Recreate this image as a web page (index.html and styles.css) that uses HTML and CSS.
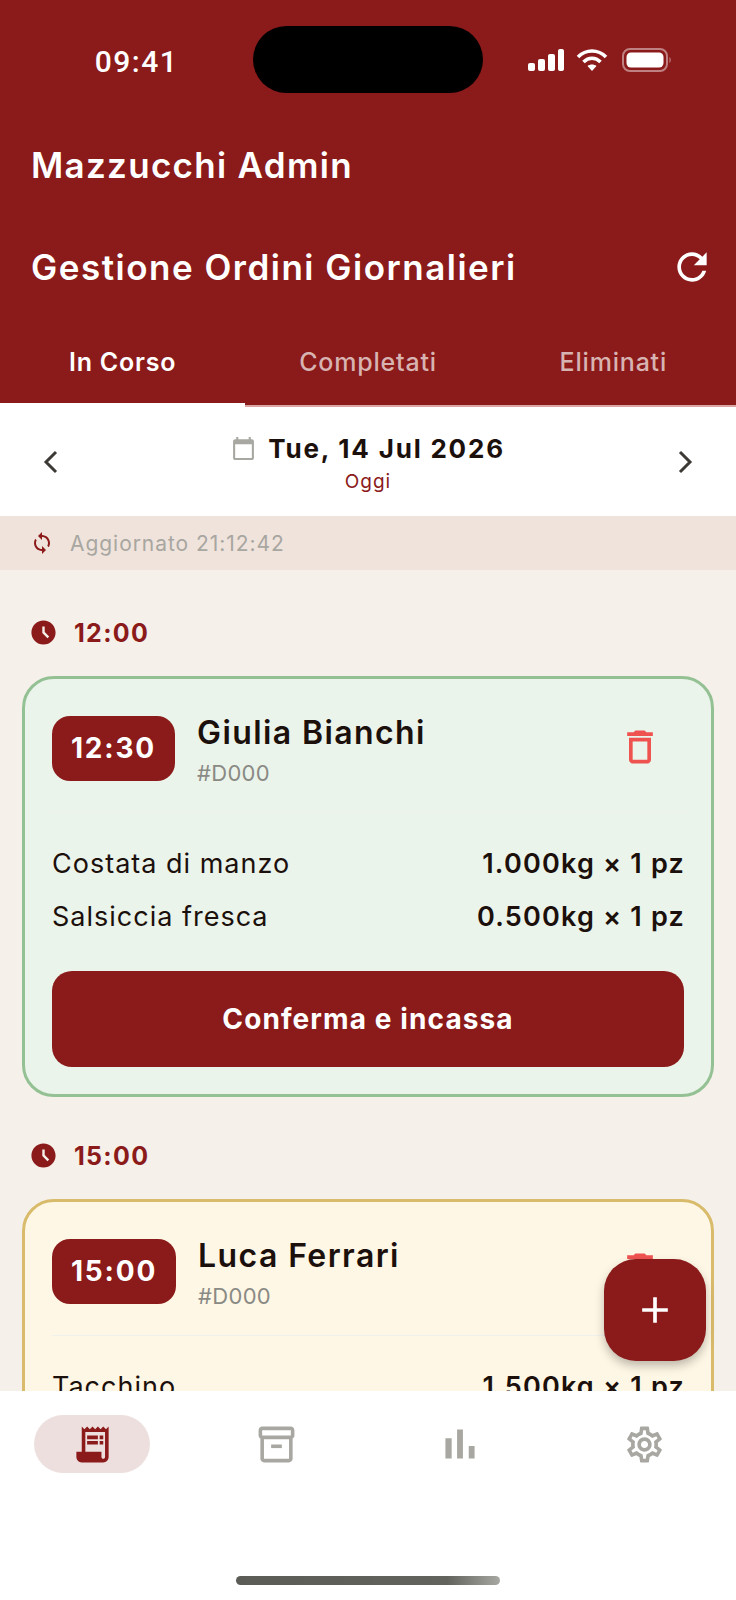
FILE: index.html
```html
<!DOCTYPE html>
<html lang="it">
<head>
    <meta charset="UTF-8">
    <meta name="viewport" content="width=device-width, initial-scale=1.0">
    <title>Mazzucchi Admin</title>
    <link rel="stylesheet" href="styles.css">
</head>
<body>
    <div class="app">
        <header class="header">
            <div class="status-bar">
                <span class="status-time">09:41</span>
                <span class="island"></span>
                <div class="status-icons">
                    <svg width="37" height="24" viewBox="0 0 37 24" fill="#fff"><rect x="1" y="15" width="7" height="8" rx="2"/><rect x="11" y="11" width="7" height="12" rx="2"/><rect x="21" y="6" width="7" height="17" rx="2"/><rect x="31" y="1" width="6" height="22" rx="2"/></svg>
                    <svg width="32" height="24" viewBox="0 0 32 24" fill="none" stroke="#fff" stroke-width="3.6"><path d="M2 9 C10 1 22 1 30 9"/><path d="M7.5 14 C12.5 9 19.500 9 24.500 14"/><path d="M16 23 L11.500 18 C14 16 18 16 20.500 18 Z" fill="#fff" stroke="none"/></svg>
                    <svg class="battery" width="50" height="24" viewBox="0 0 50 24" fill="none"><rect x="1" y="1" width="44" height="22" rx="7" stroke="#fff" stroke-opacity=".45" stroke-width="2"/><rect x="4.500" y="4.500" width="37" height="15" rx="4.500" fill="#fff"/><path d="M47.500 9 C49 10 49 14 47.500 15 Z" fill="#fff" fill-opacity=".5"/></svg>
                </div>
            </div>
            <h1 class="app-title">Mazzucchi Admin</h1>
            <div class="page-title">
                <h2>Gestione Ordini Giornalieri</h2>
                <svg class="icon-refresh" viewBox="0 0 24 24"><path d="M17.65 6.35C16.2 4.9 14.21 4 12 4c-4.42 0-7.99 3.58-7.99 8s3.57 8 7.99 8c3.730 0 6.840-2.550 7.730-6h-2.080c-.820 2.330-3.040 4-5.650 4-3.310 0-6-2.690-6-6s2.690-6 6-6c1.660 0 3.140.690 4.220 1.780L13 11h7V4l-2.350 2.350z"/></svg>
            </div>
            <nav class="tabs">
                <div class="tab active">In Corso</div>
                <div class="tab">Completati</div>
                <div class="tab">Eliminati</div>
            </nav>
        </header>

        <div class="date-row">
            <svg class="chevron" viewBox="0 0 16 24"><polyline points="13,2 3,12 13,22"/></svg>
            <div class="date-center">
                <div class="date-line">
                    <svg class="icon-calendar" viewBox="0 0 24 24"><path d="M20 3h-1V1h-2v2H7V1H5v2H4c-1.100 0-2 .900-2 2v16c0 1.100.900 2 2 2h16c1.100 0 2-.900 2-2V5c0-1.100-.900-2-2-2zm0 18H4V8h16v13z"/></svg>
                    <span class="date-text">Tue, 14 Jul 2026</span>
                </div>
                <div class="date-today">Oggi</div>
            </div>
            <svg class="chevron" viewBox="0 0 16 24"><polyline points="3,2 13,12 3,22"/></svg>
        </div>

        <div class="sync-bar">
            <svg class="icon-sync" viewBox="0 0 24 24"><path d="M12 4V1L8 5l4 4V6c3.310 0 6 2.690 6 6 0 1.010-.250 1.970-.700 2.800l1.460 1.460C19.540 15.030 20 13.570 20 12c0-4.420-3.580-8-8-8zm0 14c-3.310 0-6-2.690-6-6 0-1.010.250-1.970.700-2.800L5.240 7.740C4.460 8.970 4 10.430 4 12c0 4.420 3.580 8 8 8v3l4-4-4-4v3z"/></svg>
            <span>Aggiornato 21:12:42</span>
        </div>

        <main class="orders">
            <div class="slot">
                <svg class="icon-clock" viewBox="0 0 24 24"><path d="M11.990 2C6.470 2 2 6.480 2 12s4.470 10 9.990 10C17.520 22 22 17.520 22 12S17.520 2 11.990 2zm3.300 14.710L11 12.410V7h2v4.590l3.710 3.710-1.420 1.410z"/></svg>
                <span>12:00</span>
            </div>
            <section class="card card-paid">
                <div class="card-head">
                    <div class="time-badge">12:30</div>
                    <div class="customer">
                        <div class="customer-name">Giulia Bianchi</div>
                        <div class="customer-code">#D000</div>
                    </div>
                    <svg class="icon-delete" viewBox="0 0 24 24"><path d="M6 19c0 1.100.900 2 2 2h8c1.100 0 2-.900 2-2V7H6v12zM8 9h8v10H8V9zm7.500-5l-1-1h-5l-1 1H5v2h14V4z"/></svg>
                </div>
                <div class="items">
                    <div class="item"><span>Costata di manzo</span><strong>1.000kg × 1 pz</strong></div>
                    <div class="item"><span>Salsiccia fresca</span><strong>0.500kg × 1 pz</strong></div>
                </div>
                <button class="confirm">Conferma e incassa</button>
            </section>

            <div class="slot">
                <svg class="icon-clock" viewBox="0 0 24 24"><path d="M11.990 2C6.470 2 2 6.480 2 12s4.470 10 9.990 10C17.520 22 22 17.520 22 12S17.520 2 11.990 2zm3.300 14.710L11 12.410V7h2v4.590l3.710 3.710-1.420 1.410z"/></svg>
                <span>15:00</span>
            </div>
            <section class="card card-pending">
                <div class="card-head">
                    <div class="time-badge">15:00</div>
                    <div class="customer">
                        <div class="customer-name">Luca Ferrari</div>
                        <div class="customer-code">#D000</div>
                    </div>
                    <svg class="icon-delete" viewBox="0 0 24 24"><path d="M6 19c0 1.100.900 2 2 2h8c1.100 0 2-.900 2-2V7H6v12zM8 9h8v10H8V9zm7.500-5l-1-1h-5l-1 1H5v2h14V4z"/></svg>
                </div>
                <div class="items">
                    <div class="item"><span>Tacchino</span><strong>1.500kg × 1 pz</strong></div>
                </div>
            </section>
        </main>

        <button class="fab">
            <svg viewBox="0 0 24 24"><path d="M19 13h-6v6h-2v-6H5v-2h6V5h2v6h6v2z"/></svg>
        </button>

        <footer class="bottom-nav">
            <div class="nav-items">
                <div class="nav-item active">
                    <svg viewBox="0 0 24 24"><path d="M19.500 3.500 18 2l-1.500 1.500L15 2l-1.500 1.500L12 2l-1.500 1.500L9 2 7.500 3.500 6 2v14H3v3c0 1.660 1.340 3 3 3h12c1.660 0 3-1.340 3-3V2l-1.500 1.500zM19 19c0 .550-.450 1-1 1s-1-.450-1-1v-3H8V5h11v14z"/><path d="M9 7h6v2H9zm7 0h2v2h-2zM9 10h6v2H9zm7 0h2v2h-2z"/></svg>
                </div>
                <div class="nav-item">
                    <svg viewBox="0 0 24 24"><path d="M20 2H4c-1 0-2 .900-2 2v3.010c0 .720.430 1.340 1 1.690V20c0 1.100 1.100 2 2 2h14c.900 0 2-.900 2-2V8.700c.570-.350 1-.970 1-1.690V4c0-1.100-1-2-2-2zm-1 18H5V9h14v11zm1-13H4V4h16v3z"/><path d="M9 12h6v2H9z"/></svg>
                </div>
                <div class="nav-item">
                    <svg class="icon-chart" viewBox="0 0 24 24"><path d="M5 9.200h3V19H5zM10.600 5h2.800v14h-2.800zm5.600 8H19v6h-2.800z"/></svg>
                </div>
                <div class="nav-item">
                    <svg viewBox="0 0 24 24"><path d="M19.430 12.980c.040-.320.070-.640.070-.980 0-.340-.030-.660-.070-.980l2.110-1.650c.190-.150.240-.420.120-.640l-2-3.460c-.090-.160-.260-.250-.440-.250-.060 0-.120.010-.170.030l-2.490 1c-.520-.400-1.080-.730-1.690-.980l-.380-2.650C14.460 2.180 14.250 2 14 2h-4c-.250 0-.460.180-.490.420l-.380 2.650c-.610.250-1.170.590-1.690.980l-2.490-1c-.060-.020-.120-.030-.180-.030-.170 0-.340.090-.430.250l-2 3.460c-.130.220-.070.490.120.640l2.110 1.650c-.040.320-.070.650-.070.980 0 .330.030.660.070.980l-2.110 1.650c-.190.150-.240.420-.120.640l2 3.460c.090.160.260.250.440.250.060 0 .120-.010.170-.030l2.490-1c.520.400 1.080.730 1.690.980l.380 2.650c.030.240.240.420.490.420h4c.250 0 .460-.180.490-.420l.380-2.650c.610-.250 1.170-.590 1.690-.980l2.490 1c.060.020.120.030.180.030.170 0 .340-.090.430-.250l2-3.460c.120-.220.070-.490-.120-.640l-2.110-1.650zm-1.980-1.710c.040.310.050.520.050.730 0 .210-.020.430-.050.730l-.140 1.130.890.700 1.080.840-.700 1.210-1.270-.510-1.040-.420-.900.680c-.430.320-.840.560-1.250.730l-1.060.43-.160 1.130-.200 1.350h-1.400l-.190-1.350-.160-1.130-1.060-.43c-.430-.180-.830-.410-1.230-.710l-.910-.700-1.060.43-1.270.510-.700-1.210 1.080-.84.890-.700-.140-1.130c-.030-.310-.050-.540-.050-.740s.020-.430.050-.730l.140-1.130-.89-.700-1.080-.84.700-1.210 1.270.510 1.040.42.900-.68c.430-.320.840-.560 1.250-.73l1.060-.43.160-1.130.200-1.350h1.390l.190 1.350.160 1.130 1.060.43c.430.180.830.410 1.230.710l.91.700 1.060-.43 1.270-.51.700 1.210-1.070.85-.89.700.140 1.130zM12 8c-2.210 0-4 1.790-4 4s1.790 4 4 4 4-1.790 4-4-1.790-4-4-4zm0 6c-1.100 0-2-.900-2-2s.900-2 2-2 2 .900 2 2-.900 2-2 2z"/></svg>
                </div>
            </div>
            <div class="home-indicator"></div>
        </footer>
    </div>
</body>
</html>
```

FILE: styles.css
```css
* {
    box-sizing: border-box;
}
body {
    margin: 0;
    font-family: Inter, "Noto Sans", sans-serif;
    color: #1c100c;
    background-color: #f5f0e9;
}
h1, h2 {
    margin: 0;
}
.app {
    position: relative;
    display: flex;
    flex-direction: column;
    width: 736px;
    height: 1600px;
    overflow: hidden;
}

/* header */
.header {
    flex: none;
    background-color: #8b1a1a;
    color: #fff;
}
.status-bar {
    display: grid;
    grid-template-columns: 253px 230px 1fr;
    height: 67px;
    margin-top: 26px;
}
.status-time {
    padding: 4px 0 0 20px;
    font-family: Roboto, sans-serif;
    font-size: 30px;
    font-weight: 500;
    line-height: 63px;
    letter-spacing: 1.5px;
    text-align: center;
}
.island {
    background: #000;
    border-radius: 34px;
}
.status-icons {
    display: flex;
    align-items: center;
    gap: 12px;
    padding-left: 44px;
}
.battery {
    margin-left: 2px;
}
.app-title {
    margin: 52px 0 0 31px;
    font-size: 35px;
    font-weight: 600;
    line-height: 40px;
    letter-spacing: 1.3px;
}
.page-title {
    display: flex;
    align-items: center;
    justify-content: space-between;
    height: 40px;
    margin-top: 62px;
    padding: 0 22px 0 31px;
}
.page-title h2 {
    font-size: 35px;
    font-weight: 600;
    line-height: 40px;
    letter-spacing: 1.5px;
}
.icon-refresh {
    width: 44px;
    height: 44px;
    fill: #fff;
}
.tabs {
    display: grid;
    grid-template-columns: repeat(3, 1fr);
    height: 85px;
    margin-top: 35px;
    border-bottom: 2px solid #d9a5a5;
}
.tab {
    position: relative;
    font-size: 25px;
    font-weight: 500;
    line-height: 80px;
    letter-spacing: 0.8px;
    text-align: center;
    color: #d7b3b1;
}
.tab.active {
    font-weight: 600;
    color: #fff;
}
.tab.active::after {
    content: "";
    position: absolute;
    left: 0;
    right: 0;
    bottom: -2px;
    height: 4px;
    background: #fff;
}

/* date picker */
.date-row {
    flex: none;
    display: flex;
    align-items: center;
    justify-content: space-between;
    height: 109px;
    padding: 0 43px;
    background: #fff;
}
.chevron {
    width: 16px;
    height: 24px;
    fill: none;
    stroke: #3d3a36;
    stroke-width: 3;
}
.date-center {
    align-self: flex-start;
    display: flex;
    flex-direction: column;
    align-items: center;
    padding-top: 23px;
}
.date-line {
    display: flex;
    align-items: center;
    gap: 12px;
    height: 36px;
}
.icon-calendar {
    width: 25px;
    height: 25px;
    fill: #a8a7a1;
}
.date-text {
    font-size: 26px;
    font-weight: 700;
    letter-spacing: 1.8px;
}
.date-today {
    margin-top: 4px;
    font-size: 19px;
    line-height: 24px;
    letter-spacing: 1px;
    color: #8b1a1a;
}

/* last update bar */
.sync-bar {
    flex: none;
    display: flex;
    align-items: center;
    gap: 16px;
    height: 54px;
    padding-left: 30px;
    background: #efe3dc;
    font-size: 21px;
    letter-spacing: 0.95px;
    color: #a8a6a0;
}
.sync-bar span {
    padding-top: 1px;
}
.icon-sync {
    width: 24px;
    height: 24px;
    fill: #8b1a1a;
}

/* orders */
.orders {
    flex: 1;
    min-height: 0;
    padding: 0 22px;
    overflow: hidden;
}
.slot {
    display: flex;
    align-items: center;
    gap: 16px;
    height: 29px;
    margin-top: 44px;
    padding-left: 7px;
    font-size: 25px;
    font-weight: 700;
    letter-spacing: 1.3px;
    color: #8b1a1a;
}
.orders .slot:first-child {
    margin-top: 48px;
}
.icon-clock {
    width: 29px;
    height: 29px;
    fill: #8b1a1a;
}
.card {
    margin-top: 29px;
    padding: 37px 27px 27px;
    border: 3px solid;
    border-radius: 32px;
}
.card-paid {
    background: #ebf4ea;
    border-color: #94c194;
}
.card-pending {
    background: #fff7e5;
    border-color: #d9bb6c;
}
.card-head {
    display: flex;
    align-items: flex-start;
    gap: 22px;
    padding-bottom: 25px;
    border-bottom: 1px solid #f0f1ec;
}
.time-badge {
    flex: none;
    padding: 0 19px;
    border-radius: 18px;
    background: #8b1a1a;
    color: #fff;
    font-size: 28px;
    font-weight: 700;
    line-height: 65px;
    letter-spacing: 1.8px;
}
.customer {
    flex: 1;
    margin-top: -3px;
}
.customer-name {
    font-size: 32px;
    font-weight: 600;
    line-height: 40px;
    letter-spacing: 1.4px;
}
.customer-code {
    margin-top: 6px;
    font-size: 22px;
    line-height: 28px;
    letter-spacing: 0.3px;
    color: #8a8a85;
}
.icon-delete {
    flex: none;
    width: 44px;
    height: 44px;
    margin: 9px 22px 0 0;
    fill: #ef5350;
}
.items {
    display: flex;
    flex-direction: column;
    gap: 17px;
    margin-top: 33px;
}
.item {
    display: flex;
    justify-content: space-between;
    font-size: 27px;
    line-height: 36px;
    letter-spacing: 1px;
}
.item strong {
    margin-right: -1px;
    font-weight: 600;
    letter-spacing: 1.2px;
}
.confirm {
    display: block;
    width: 100%;
    height: 96px;
    margin-top: 36px;
    border: none;
    border-radius: 20px;
    background: #8b1a1a;
    color: #fff;
    font-family: inherit;
    font-size: 28px;
    font-weight: 700;
    letter-spacing: 1.1px;
}
.fab {
    position: absolute;
    right: 30px;
    bottom: 239px;
    z-index: 2;
    display: flex;
    align-items: center;
    justify-content: center;
    width: 102px;
    height: 102px;
    padding: 0;
    border: none;
    border-radius: 32px;
    background: #8b1a1a;
    box-shadow: 0 5px 10px rgba(0,0,0,0.25);
}
.fab svg {
    width: 44px;
    height: 44px;
    fill: #fff;
}

/* bottom nav */
.bottom-nav {
    flex: none;
    display: flex;
    flex-direction: column;
    justify-content: space-between;
    align-items: center;
    height: 209px;
    padding: 24px 0 15px;
    background: #fff;
}
.nav-items {
    display: grid;
    grid-template-columns: repeat(4, 1fr);
    width: 100%;
}
.nav-item {
    display: flex;
    align-items: center;
    justify-content: center;
    justify-self: center;
    width: 116px;
    height: 58px;
    border-radius: 29px;
}
.nav-item svg {
    width: 43px;
    height: 43px;
    fill: #a8a7a1;
}
.nav-item .icon-chart {
    width: 50px;
    height: 50px;
}
.nav-item.active {
    background: #eedfdf;
}
.nav-item.active svg {
    fill: #8b1a1a;
}
.home-indicator {
    width: 264px;
    height: 9px;
    border-radius: 5px;
    background: linear-gradient(90deg, #5c5c57 0%, #63635e 80%, #a8a8a3 100%);
}
```
